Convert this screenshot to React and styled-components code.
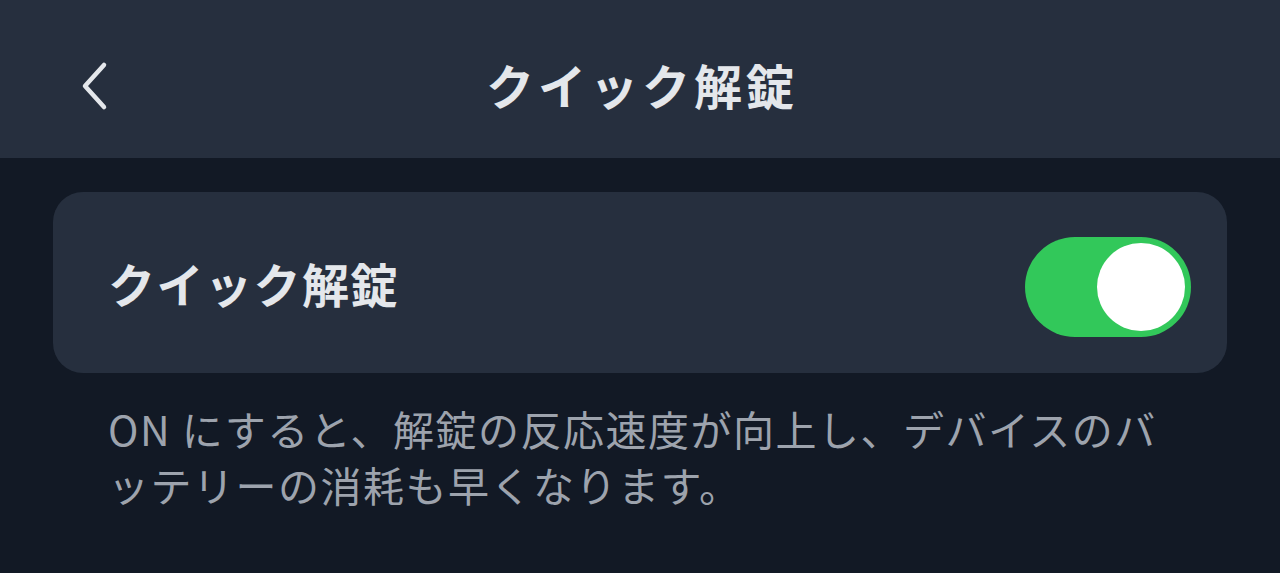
import React, { useState } from 'react';
import styled, { createGlobalStyle } from 'styled-components';

const GlobalStyle = createGlobalStyle`
  html, body {
    margin: 0;
    padding: 0;
    background: #121925;
  }
  body {
    font-family: "Noto Sans CJK JP", "Noto Sans", sans-serif;
  }
`;

const Page = styled.div`
  width: 1280px;
  height: 573px;
  background: #121925;
  overflow: hidden;
`;

const Header = styled.header`
  height: 158px;
  background: #262f3e;
  display: flex;
  align-items: center;
  justify-content: center;
  position: relative;
`;

const BackButton = styled.button`
  position: absolute;
  left: 72px;
  top: 56px;
  width: 44px;
  height: 60px;
  padding: 0;
  border: none;
  background: none;
  display: flex;
  align-items: center;
  justify-content: center;
  cursor: pointer;
`;

const Title = styled.h1`
  margin: 0;
  font-size: 48px;
  font-weight: 700;
  color: #e4e7eb;
  letter-spacing: 4px;
  padding-top: 10px;
  padding-left: 4px;
`;

const Content = styled.main`
  padding: 34px 53px 0;
`;

const Card = styled.section`
  height: 181px;
  background: #262f3e;
  border-radius: 30px;
  display: flex;
  align-items: center;
  justify-content: space-between;
  padding: 0 36px 0 55px;
  box-sizing: border-box;
`;

const Label = styled.span`
  font-size: 47px;
  font-weight: 700;
  color: #e4e7eb;
  letter-spacing: 1.5px;
`;

const Switch = styled.button`
  width: 166px;
  height: 100px;
  margin-top: 8px;
  border-radius: 50px;
  border: none;
  padding: 0;
  background: ${(p) => (p.$on ? '#32c85a' : '#4a5261')};
  position: relative;
  cursor: pointer;
`;

const Knob = styled.span`
  position: absolute;
  top: 6px;
  left: ${(p) => (p.$on ? '72px' : '6px')};
  width: 88px;
  height: 88px;
  border-radius: 50%;
  background: #ffffff;
  transition: left 0.2s;
`;

const Note = styled.p`
  margin: 27px 0 0;
  padding: 0 50px 0 55px;
  font-size: 41px;
  line-height: 56px;
  color: #9da3ad;
  letter-spacing: 1.5px;
`;

const App = () => {
  const [on, setOn] = useState(true);
  return (
    <Page>
      <GlobalStyle />
      <Header>
        <BackButton aria-label="戻る">
          <svg width="30" height="50" viewBox="0 0 30 50" fill="none">
            <path d="M25 4 L6 25 L25 46" stroke="#e4e7eb" strokeWidth="4.5" strokeLinecap="round" strokeLinejoin="round" />
          </svg>
        </BackButton>
        <Title>クイック解錠</Title>
      </Header>
      <Content>
        <Card>
          <Label>クイック解錠</Label>
          <Switch $on={on} onClick={() => setOn(!on)} aria-pressed={on}>
            <Knob $on={on} />
          </Switch>
        </Card>
        <Note>ON にすると、解錠の反応速度が向上し、デバイスのバッテリーの消耗も早くなります。</Note>
      </Content>
    </Page>
  );
};

export default App;
